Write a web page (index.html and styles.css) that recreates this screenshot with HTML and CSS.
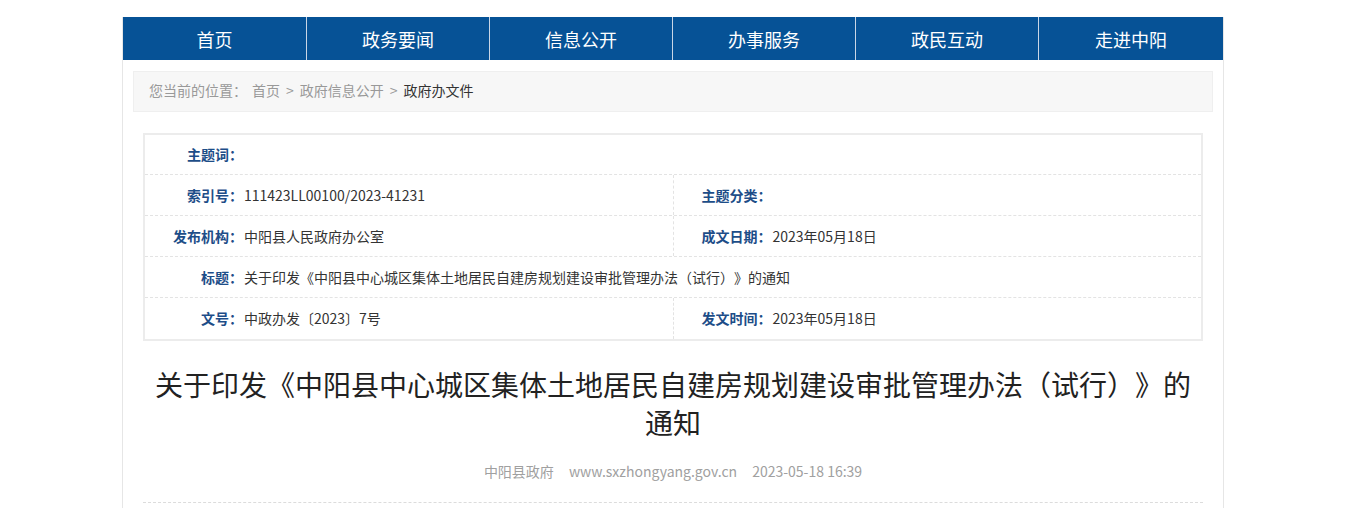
FILE: index.html
```html
<!DOCTYPE html>
<html lang="zh-CN">
<head>
<meta charset="utf-8">
<title>关于印发《中阳县中心城区集体土地居民自建房规划建设审批管理办法（试行）》的通知</title>
<link rel="stylesheet" href="styles.css">
</head>
<body>
<div class="page">
  <nav class="nav">
    <a class="nav-item">首页</a>
    <a class="nav-item">政务要闻</a>
    <a class="nav-item">信息公开</a>
    <a class="nav-item">办事服务</a>
    <a class="nav-item">政民互动</a>
    <a class="nav-item">走进中阳</a>
  </nav>
  <div class="content">
    <div class="crumb">
      <span class="crumb-lead">您当前的位置：</span>
      <a class="crumb-link">首页</a>
      <span class="crumb-sep">&gt;</span>
      <a class="crumb-link">政府信息公开</a>
      <span class="crumb-sep">&gt;</span>
      <span class="crumb-cur">政府办文件</span>
    </div>

    <div class="info">
      <div class="row first">
        <div class="cell full"><span class="label">主题词：</span><span class="value"></span></div>
      </div>
      <div class="row">
        <div class="cell"><span class="label">索引号：</span><span class="value">111423LL00100/2023-41231</span></div>
        <div class="cell split"><span class="label">主题分类：</span><span class="value"></span></div>
      </div>
      <div class="row">
        <div class="cell"><span class="label">发布机构：</span><span class="value">中阳县人民政府办公室</span></div>
        <div class="cell split"><span class="label">成文日期：</span><span class="value">2023年05月18日</span></div>
      </div>
      <div class="row">
        <div class="cell full"><span class="label">标题：</span><span class="value">关于印发《中阳县中心城区集体土地居民自建房规划建设审批管理办法（试行）》的通知</span></div>
      </div>
      <div class="row last">
        <div class="cell"><span class="label">文号：</span><span class="value">中政办发〔2023〕7号</span></div>
        <div class="cell split"><span class="label">发文时间：</span><span class="value">2023年05月18日</span></div>
      </div>
    </div>

    <div class="article">
      <h1 class="title">关于印发《中阳县中心城区集体土地居民自建房规划建设审批管理办法（试行）》的通知</h1>
      <div class="meta">
        <span class="meta-item">中阳县政府</span>
        <span class="meta-item">www.sxzhongyang.gov.cn</span>
        <span class="meta-item">2023-05-18 16:39</span>
      </div>
    </div>
  </div>
</div>
</body>
</html>
```

FILE: styles.css
```css
* {
  box-sizing: border-box;
}

html, body {
  margin: 0;
  padding: 0;
  background: #ffffff;
  font-family: "Noto Sans CJK SC", "Microsoft YaHei", "Noto Sans", sans-serif;
  color: #333;
  text-spacing-trim: space-all;
}

body {
  padding-top: 17px;
  height: 508px;
  overflow: hidden;
}

.page {
  width: 1102px;
  margin-left: 122px;
  border-left: 1px solid #e6e6e6;
  border-right: 1px solid #e6e6e6;
  min-height: 600px;
}

.nav {
  display: grid;
  grid-template-columns: repeat(5, 183px) 1fr;
  height: 43px;
  background: #065296;
}

.nav-item {
  display: flex;
  align-items: center;
  justify-content: center;
  color: #fff;
  font-size: 18px;
  text-decoration: none;
  border-left: 1px solid #c9d6e6;
}

.nav-item:first-child {
  border-left: none;
}

.content {
  padding: 11px 10px 0 10px;
}

.crumb {
  height: 41px;
  background: #f7f7f7;
  border: 1px solid #efefef;
  display: flex;
  align-items: center;
  padding-left: 15px;
  padding-bottom: 3px;
  font-size: 14px;
  color: #999;
  gap: 5px;
}

.crumb-link {
  color: #999;
  text-decoration: none;
}

.crumb-sep {
  color: #999;
  margin: 0 1px;
}

.crumb-cur {
  color: #333;
}

.info {
  margin: 21px 10px 0 10px;
  border: 2px solid #ececec;
}

.row {
  display: flex;
  height: 41px;
  border-bottom: 1px dashed #e3e3e3;
}

.row.first {
  height: 40px;
}

.row.last {
  border-bottom: none;
}

.cell {
  flex: 1;
  display: flex;
  align-items: center;
  font-size: 14px;
  padding-bottom: 1px;
}

.cell.split {
  border-left: 1px dashed #e3e3e3;
}

.label {
  width: 98px;
  flex: none;
  text-align: right;
  font-weight: bold;
  color: #1d4d88;
}

.value {
  color: #333;
  padding-left: 1px;
}

.article {
  margin: 0 10px;
  border-bottom: 1px dashed #dcdcdc;
  padding-bottom: 21px;
}

.title {
  margin: 24px 0 0 0;
  font-size: 28px;
  line-height: 38px;
  font-weight: normal;
  color: #222;
  text-align: center;
}

.meta {
  margin-top: 20px;
  display: flex;
  justify-content: center;
  font-size: 14px;
  line-height: 20px;
  color: #a0a0a0;
  gap: 15px;
}
```
